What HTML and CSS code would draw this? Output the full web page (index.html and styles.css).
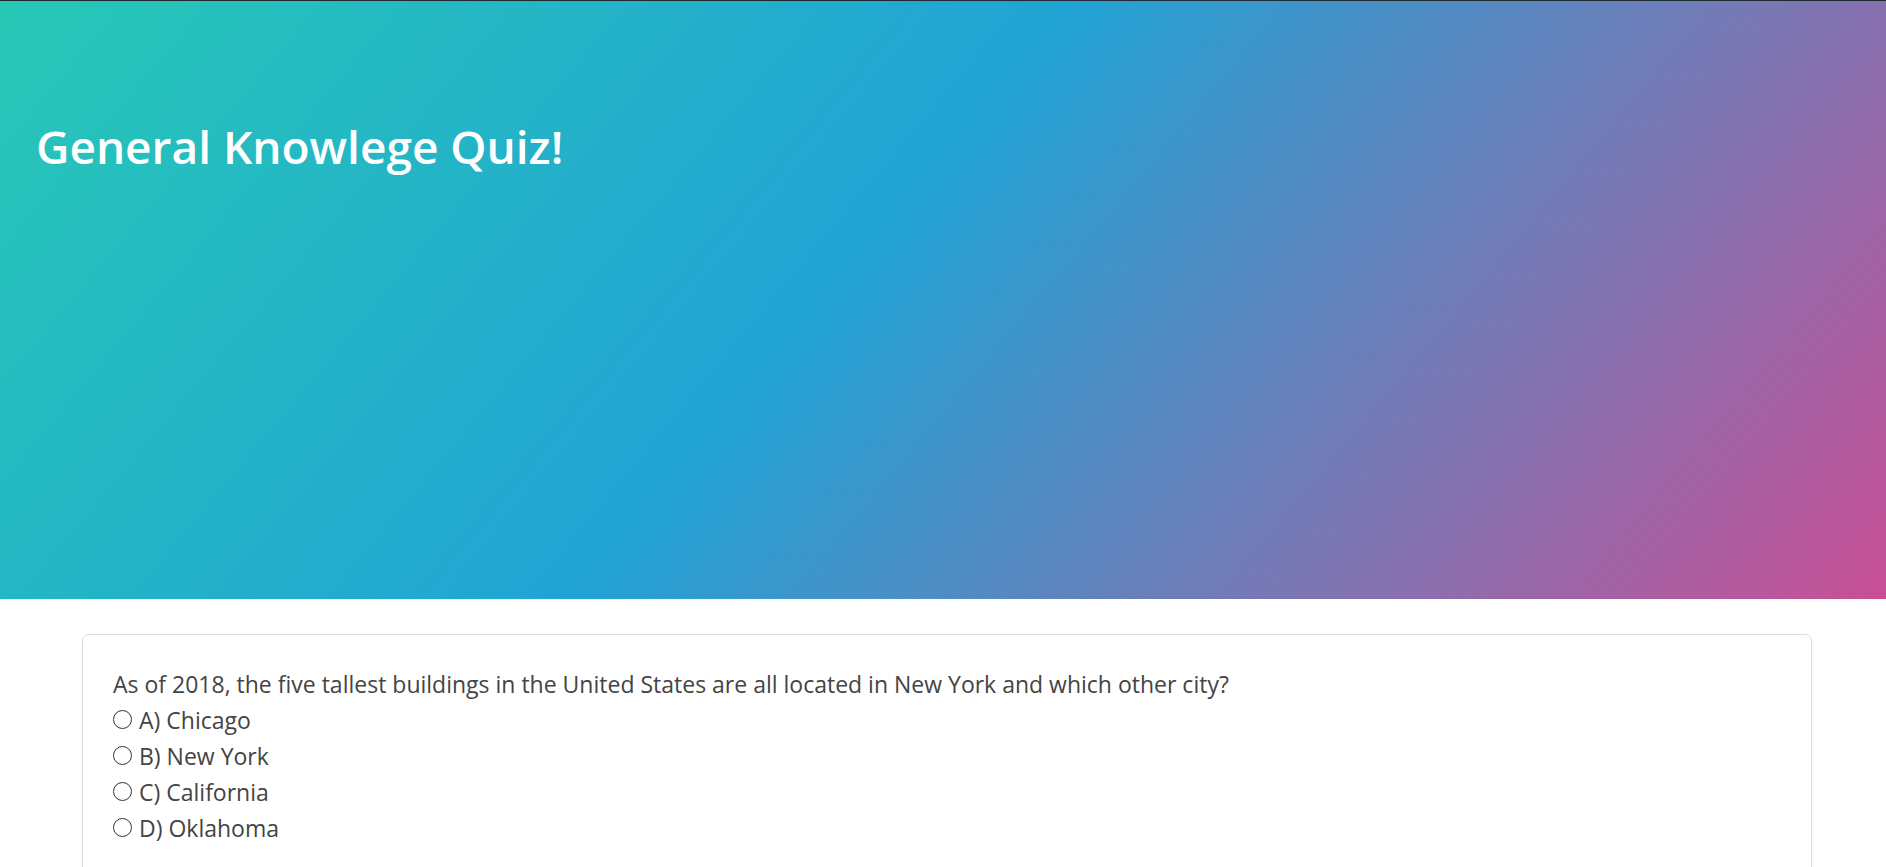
FILE: index.html
```html
<!DOCTYPE html>
<html lang="en">
<head>
<meta charset="utf-8">
<title>General Knowlege Quiz!</title>
<link rel="stylesheet" href="styles.css">
</head>
<body>
<header class="hero">
  <h1 class="hero-title">General Knowlege Quiz!</h1>
</header>
<main class="content">
  <section class="card">
    <p class="question">As of 2018, the five tallest buildings in the United States are all located in New York and which other city?</p>
    <label class="option"><input type="radio" name="q1" class="radio"><span>A) Chicago</span></label>
    <label class="option"><input type="radio" name="q1" class="radio"><span>B) New York</span></label>
    <label class="option"><input type="radio" name="q1" class="radio"><span>C) California</span></label>
    <label class="option"><input type="radio" name="q1" class="radio"><span>D) Oklahoma</span></label>
  </section>
</main>
</body>
</html>
```
FILE: styles.css
```css
* { box-sizing: border-box; }
html, body { margin: 0; padding: 0; }
body {
  font-family: "Open Sans", "Noto Sans", sans-serif;
  color: #444;
  background: #fff;
}
.hero {
  height: 599px;
  border-top: 1px solid #1d2b30;
  background: linear-gradient(130deg, #27c8b6 0%, #21a3d5 45%, #8a6fae 80%, #c94f96 100%);
  padding: 118px 36px 0;
}
.hero-title {
  margin: 0;
  color: #fff;
  font-size: 46px;
  font-weight: 600;
  line-height: 1.2;
}
.content {
  padding: 35px 74px 0 82px;
}
.card {
  border: 1px solid #dedede;
  border-radius: 7px;
  box-shadow: 0 1px 3px rgba(0,0,0,0.06);
  padding: 31px 30px 30px;
  min-height: 300px;
}
.question {
  margin: 0;
  font-size: 23px;
  line-height: 36px;
}
.option {
  display: flex;
  align-items: center;
  font-size: 23px;
  line-height: 36px;
}
.radio {
  appearance: none;
  -webkit-appearance: none;
  width: 19px;
  height: 19px;
  border: 1px solid #333;
  border-radius: 50%;
  margin: 0 7px 0 0;
  background: #fff;
  flex: none;
  position: relative;
  top: -1px;
}
```
